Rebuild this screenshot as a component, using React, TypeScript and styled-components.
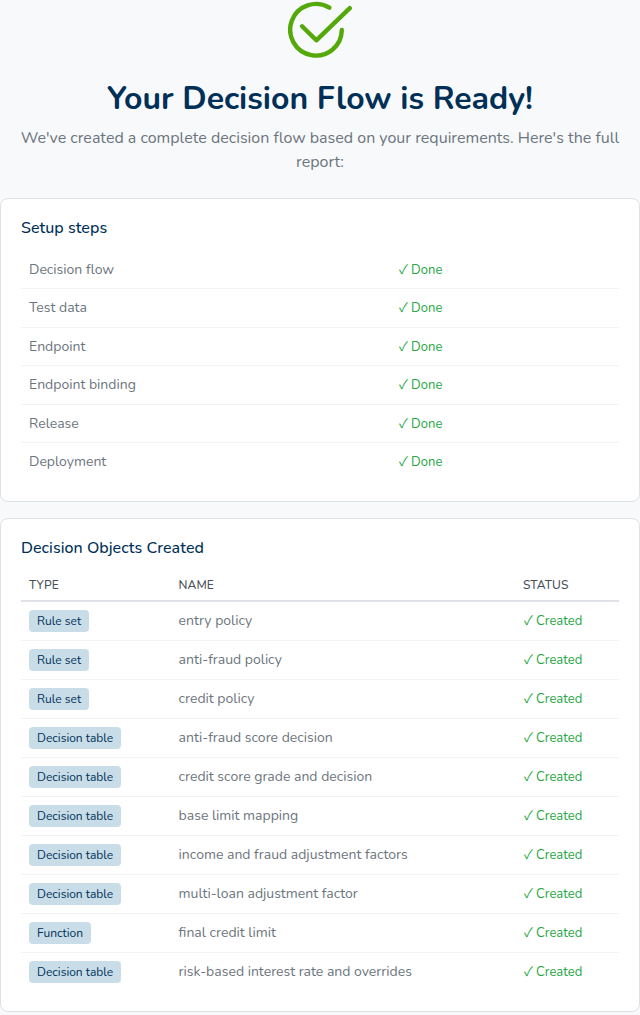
import React from "react";
import styled, { createGlobalStyle } from "styled-components";

const GlobalStyle = createGlobalStyle`
  * { box-sizing: border-box; }
  body {
    margin: 0;
    background: #f8f9fb;
    font-family: Nunito, "Noto Sans CJK JP", sans-serif;
    color: #6c757d;
  }
`;

const Page = styled.main`
  display: flex;
  flex-direction: column;
  min-height: 1015px;
  overflow: hidden;
`;

const Hero = styled.header`
  display: flex;
  flex-direction: column;
  align-items: center;
  height: 198px;
  text-align: center;
`;

const HeroIcon = styled.svg`
  display: block;
  width: 64px;
  height: 60px;
  flex: none;
`;

const Title = styled.h1`
  margin: 20px 0 8px;
  font-size: 32px;
  line-height: 38px;
  font-weight: 700;
  color: #003057;
  white-space: nowrap;
`;

const Subtitle = styled.p`
  margin: 0;
  font-size: 16px;
  line-height: 24px;
  white-space: nowrap;
`;

const Card = styled.section<{ $height: number }>`
  height: ${(p) => p.$height}px;
  margin-bottom: 16px;
  padding: 18px 20px 0;
  flex: none;
  background: #fff;
  border: 1px solid #dee2e6;
  border-radius: 8px;
`;

const CardTitle = styled.h2`
  margin: 0;
  font-size: 16px;
  line-height: 22px;
  font-weight: 500;
  letter-spacing: 0.04px;
  color: #003057;
`;

const SetupList = styled.div`
  padding-top: 11.5px;
`;

const SetupRow = styled.div`
  display: grid;
  grid-template-columns: 369px 1fr;
  align-items: center;
  height: 38.5px;
  padding: 0.5px 8px 0;
  border-bottom: 1px solid #f1f3f5;
  &:last-child { border-bottom-color: transparent; }
`;

const ObjectGrid = styled.div`
  padding-top: 10px;
`;

const ObjectHead = styled.div`
  display: grid;
  grid-template-columns: 149.6px 344.4px 1fr;
  align-items: center;
  height: 33px;
  padding: 0 8px;
  border-bottom: 2px solid #dee2e6;
`;

const HeadLabel = styled.span`
  font-size: 12px;
  line-height: 16px;
  font-weight: 500;
  letter-spacing: 0.08px;
  color: #495057;
`;

const ObjectRow = styled.div`
  display: grid;
  grid-template-columns: 149.6px 344.4px 1fr;
  align-items: center;
  justify-items: start;
  height: 39px;
  padding: 0 8px;
  border-bottom: 1px solid #f1f3f5;
  &:last-child { border-bottom-color: transparent; }
`;

const Label = styled.span`
  font-size: 14px;
  line-height: 20px;
  white-space: nowrap;
`;

const Status = styled.span`
  padding-left: 0.9px;
  font-size: 13px;
  line-height: 18px;
  color: #28a745;
  white-space: nowrap;
`;

const Badge = styled.span`
  height: 22px;
  padding: 0 8px;
  border-radius: 4px;
  background: #c8dde8;
  color: #003057;
  font-size: 12px;
  line-height: 22px;
  white-space: nowrap;
`;

const steps = ["Decision flow", "Test data", "Endpoint", "Endpoint binding", "Release", "Deployment"];

const objects: [string, string][] = [
  ["Rule set", "entry policy"],
  ["Rule set", "anti-fraud policy"],
  ["Rule set", "credit policy"],
  ["Decision table", "anti-fraud score decision"],
  ["Decision table", "credit score grade and decision"],
  ["Decision table", "base limit mapping"],
  ["Decision table", "income and fraud adjustment factors"],
  ["Decision table", "multi-loan adjustment factor"],
  ["Function", "final credit limit"],
  ["Decision table", "risk-based interest rate and overrides"],
];

export default function App() {
  return (
    <Page>
      <GlobalStyle />
      <Hero>
        <HeroIcon viewBox="0 0 64 60" fill="none" stroke="#54a80a" strokeWidth="4.4" strokeLinecap="round" strokeLinejoin="round">
          <path d="M41.3 7.7A25.8 25.8 0 1 0 53.8 30" />
          <path d="M14.1 26.3 28.3 40.3 61.8 8.2" />
        </HeroIcon>
        <Title>Your Decision Flow is Ready!</Title>
        <Subtitle>
          We've created a complete decision flow based on your requirements. Here's the full
          <br />
          report:
        </Subtitle>
      </Hero>
      <Card $height={304}>
        <CardTitle>Setup steps</CardTitle>
        <SetupList>
          {steps.map((s) => (
            <SetupRow key={s}>
              <Label>{s}</Label>
              <Status>✓ Done</Status>
            </SetupRow>
          ))}
        </SetupList>
      </Card>
      <Card $height={494}>
        <CardTitle>Decision Objects Created</CardTitle>
        <ObjectGrid>
          <ObjectHead>
            <HeadLabel>TYPE</HeadLabel>
            <HeadLabel>NAME</HeadLabel>
            <HeadLabel>STATUS</HeadLabel>
          </ObjectHead>
          {objects.map(([type, name]) => (
            <ObjectRow key={name}>
              <Badge>{type}</Badge>
              <Label>{name}</Label>
              <Status>✓ Created</Status>
            </ObjectRow>
          ))}
        </ObjectGrid>
      </Card>
    </Page>
  );
}
